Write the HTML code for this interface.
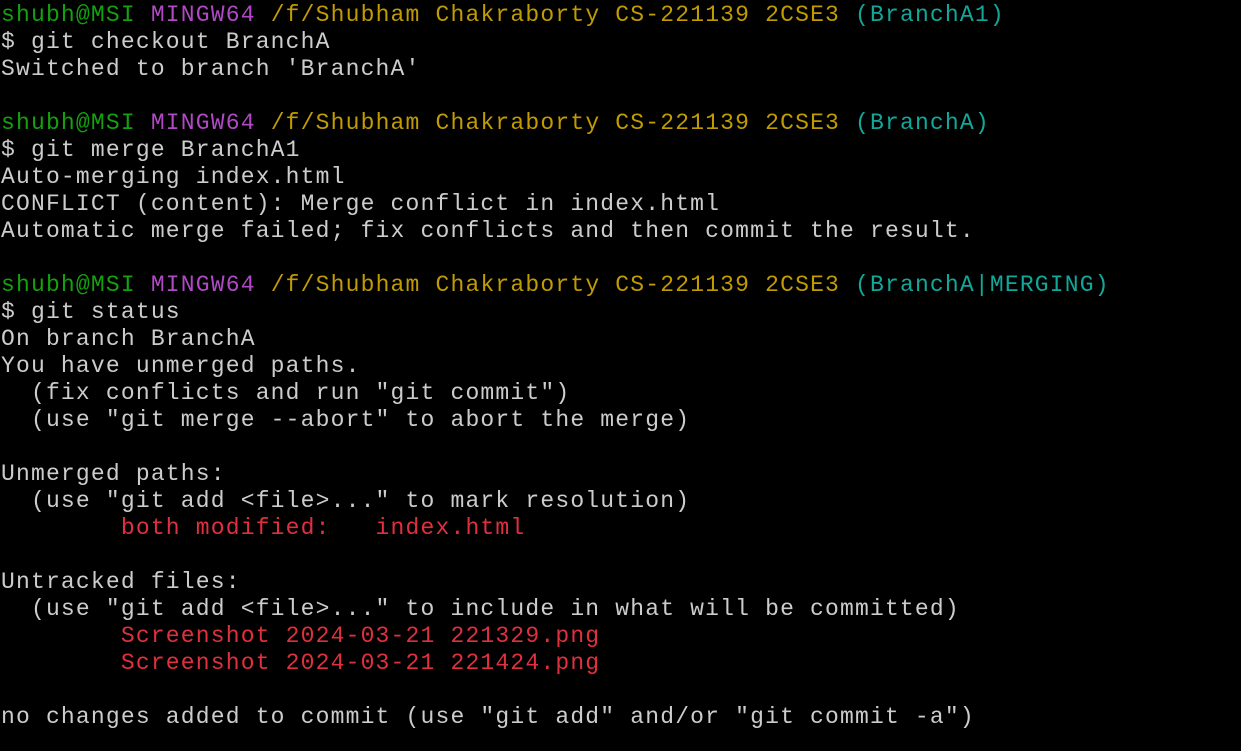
<!DOCTYPE html>
<html><head><meta charset="utf-8"><style>
html,body{margin:0;padding:0;background:#000;width:1241px;height:751px;overflow:hidden}
pre{margin:0;padding:2px 0 0 1px;font-family:"Liberation Mono",monospace;font-size:23px;letter-spacing:1.18px;line-height:27px;color:#cccccc}
.g{color:#13a10e}.m{color:#b148c6}.y{color:#c19c00}.c{color:#11a89a}.r{color:#e0303e}
</style></head><body><pre><span class="g">shubh@MSI</span> <span class="m">MINGW64</span> <span class="y">/f/Shubham Chakraborty CS-221139 2CSE3</span> <span class="c">(BranchA1)</span>
$ git checkout BranchA
Switched to branch 'BranchA'

<span class="g">shubh@MSI</span> <span class="m">MINGW64</span> <span class="y">/f/Shubham Chakraborty CS-221139 2CSE3</span> <span class="c">(BranchA)</span>
$ git merge BranchA1
Auto-merging index.html
CONFLICT (content): Merge conflict in index.html
Automatic merge failed; fix conflicts and then commit the result.

<span class="g">shubh@MSI</span> <span class="m">MINGW64</span> <span class="y">/f/Shubham Chakraborty CS-221139 2CSE3</span> <span class="c">(BranchA|MERGING)</span>
$ git status
On branch BranchA
You have unmerged paths.
  (fix conflicts and run "git commit")
  (use "git merge --abort" to abort the merge)

Unmerged paths:
  (use "git add &lt;file&gt;..." to mark resolution)
        <span class="r">both modified:   index.html</span>

Untracked files:
  (use "git add &lt;file&gt;..." to include in what will be committed)
        <span class="r">Screenshot 2024-03-21 221329.png</span>
        <span class="r">Screenshot 2024-03-21 221424.png</span>

no changes added to commit (use "git add" and/or "git commit -a")
</pre></body></html>
